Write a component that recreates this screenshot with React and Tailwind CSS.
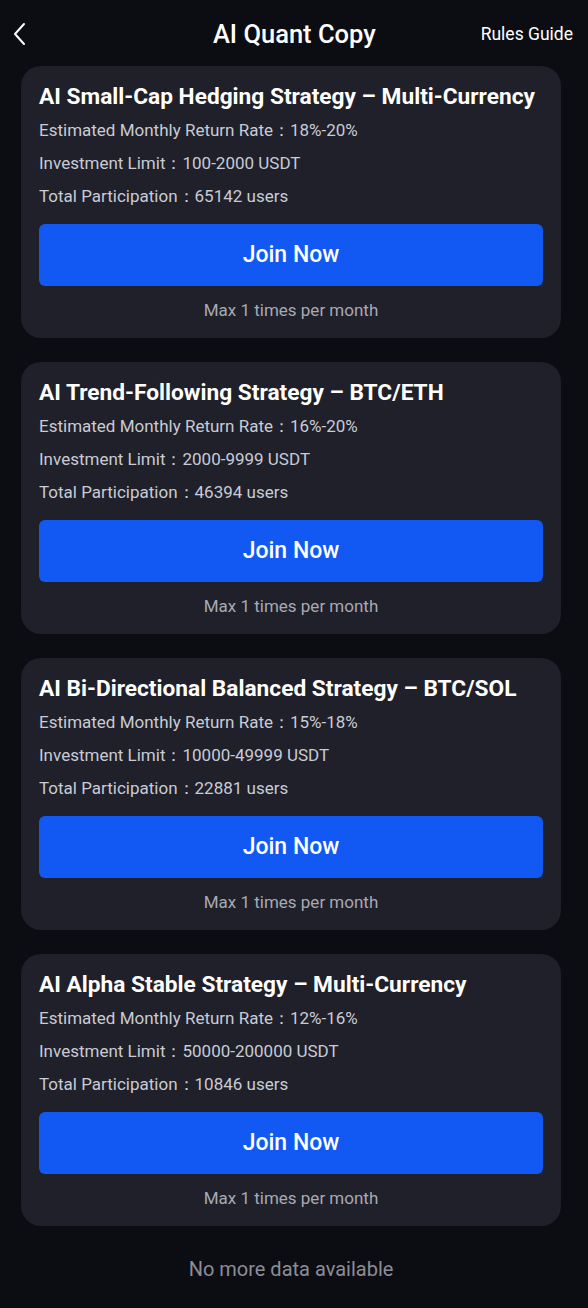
import React from 'react';

const STRATEGIES = [
  { name: 'AI Small-Cap Hedging Strategy – Multi-Currency', rate: '18%-20%', limit: '100-2000 USDT', users: '65142' },
  { name: 'AI Trend-Following Strategy – BTC/ETH', rate: '16%-20%', limit: '2000-9999 USDT', users: '46394' },
  { name: 'AI Bi-Directional Balanced Strategy – BTC/SOL', rate: '15%-18%', limit: '10000-49999 USDT', users: '22881' },
  { name: 'AI Alpha Stable Strategy – Multi-Currency', rate: '12%-16%', limit: '50000-200000 USDT', users: '10846' },
];

function StrategyCard({ s }) {
  return (
    <div className="bg-[#1f2029] rounded-[20px] px-[18px] pt-[17px] pb-4">
      <h2 className="text-[22.7px] leading-[28px] font-bold text-white whitespace-nowrap">{s.name}</h2>
      <div className="mt-[3px] text-[17px] leading-[33px] text-[#c9cbd6]">
        <p>Estimated Monthly Return Rate：{s.rate}</p>
        <p>Investment Limit：{s.limit}</p>
        <p>Total Participation：{s.users} users</p>
      </div>
      <button className="mt-[11px] w-full h-[62px] rounded-md bg-[#1259f3] text-white text-[23px] font-medium">
        Join Now
      </button>
      <p className="mt-3 text-center text-[17px] leading-6 text-[#a7a9b5]">Max 1 times per month</p>
    </div>
  );
}

export default function App() {
  return (
    <div className="min-h-[1308px] bg-[#0c0d13]" style={{ fontFamily: 'Roboto, "Noto Sans", sans-serif' }}>
      {/* Header */}
      <div className="h-[66px] flex items-center justify-between pl-[12px] pr-[15px] pt-[2px]">
        <svg width="16" height="24" viewBox="0 0 16 24" fill="none" className="text-white">
          <path d="M12 2 L3 12 L12 22" stroke="currentColor" strokeWidth="2" strokeLinecap="round" strokeLinejoin="round" />
        </svg>
        <h1 className="text-[25.5px] font-medium text-white ml-[80px]">AI Quant Copy</h1>
        <span className="text-[17.5px] text-white">Rules Guide</span>
      </div>

      {/* Strategy list */}
      <div className="pl-[21px] pr-[27px] flex flex-col gap-6">
        {STRATEGIES.map((s, i) => (
          <StrategyCard key={i} s={s} />
        ))}
      </div>

      <p className="mt-[29px] text-center text-[20px] leading-7 text-[#8b8d97] pr-[6px]">No more data available</p>
    </div>
  );
}
